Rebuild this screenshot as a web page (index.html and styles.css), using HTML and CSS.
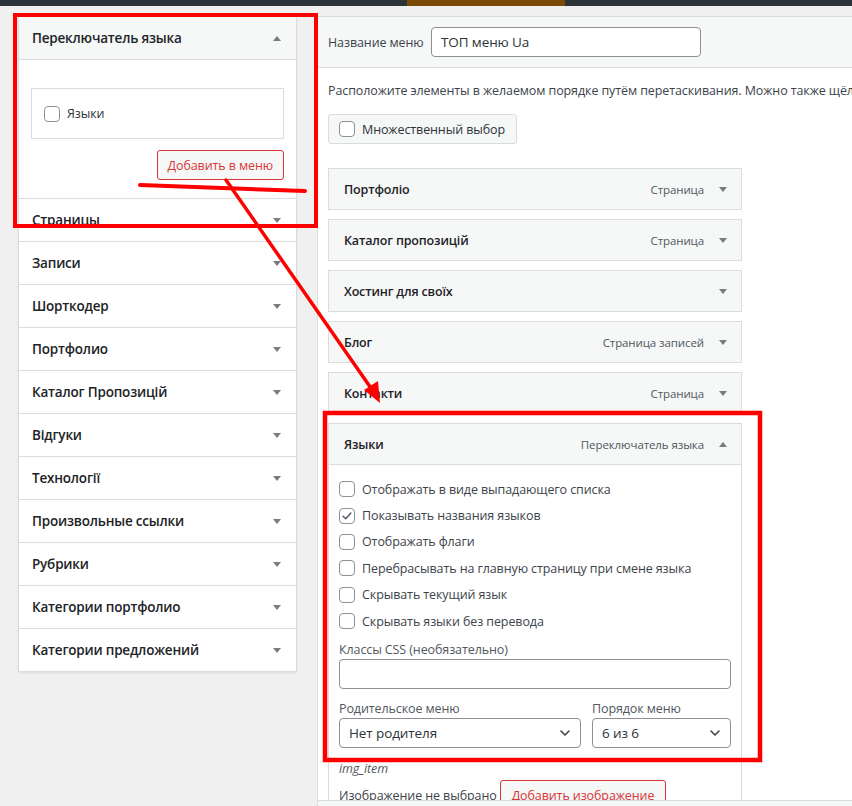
FILE: index.html
```html
<!DOCTYPE html>
<html lang="ru">
<head>
<meta charset="utf-8">
<title>Меню</title>
<link rel="stylesheet" href="styles.css">
</head>
<body>
<div class="topbar"><span class="topbar-accent"></span></div>
<div class="wrap">
  <div class="sidebar">
    <div class="accordion">
      <div class="acc-section open">
        <div class="acc-title"><span>Переключатель языка</span><i class="tri up"></i></div>
        <div class="acc-content">
          <div class="choice-box"><span class="cb"></span><span>Языки</span></div>
          <div class="acc-actions"><span class="btn-red">Добавить в меню</span></div>
        </div>
      </div>
      <div class="acc-section"><div class="acc-title"><span>Страницы</span><i class="tri"></i></div></div>
      <div class="acc-section"><div class="acc-title"><span>Записи</span><i class="tri"></i></div></div>
      <div class="acc-section"><div class="acc-title"><span>Шорткодер</span><i class="tri"></i></div></div>
      <div class="acc-section"><div class="acc-title"><span>Портфолио</span><i class="tri"></i></div></div>
      <div class="acc-section"><div class="acc-title"><span>Каталог Пропозицій</span><i class="tri"></i></div></div>
      <div class="acc-section"><div class="acc-title"><span>Відгуки</span><i class="tri"></i></div></div>
      <div class="acc-section"><div class="acc-title"><span>Технології</span><i class="tri"></i></div></div>
      <div class="acc-section"><div class="acc-title"><span>Произвольные ссылки</span><i class="tri"></i></div></div>
      <div class="acc-section"><div class="acc-title"><span>Рубрики</span><i class="tri"></i></div></div>
      <div class="acc-section"><div class="acc-title"><span>Категории портфолио</span><i class="tri"></i></div></div>
      <div class="acc-section"><div class="acc-title"><span>Категории предложений</span><i class="tri"></i></div></div>
    </div>
  </div>

  <div class="menu-mgmt">
    <div class="menu-header">
      <label class="menu-name-label">Название меню</label>
      <div class="text-input name-input">ТОП меню Ua</div>
    </div>
    <div class="menu-body">
      <p class="instructions">Расположите элементы в желаемом порядке путём перетаскивания. Можно также щёлкнуть на ссылку элемента, чтобы открыть дополнительные настройки.</p>
      <div class="bulk-btn"><span class="cb"></span><span>Множественный выбор</span></div>
      <div class="items">
        <div class="item"><div class="item-handle"><span class="item-title">Портфоліо</span><span class="item-type">Страница</span><i class="tri"></i></div></div>
        <div class="item"><div class="item-handle"><span class="item-title">Каталог пропозицій</span><span class="item-type">Страница</span><i class="tri"></i></div></div>
        <div class="item"><div class="item-handle"><span class="item-title">Хостинг для своїх</span><i class="tri"></i></div></div>
        <div class="item"><div class="item-handle"><span class="item-title">Блог</span><span class="item-type">Страница записей</span><i class="tri"></i></div></div>
        <div class="item"><div class="item-handle"><span class="item-title">Контакти</span><span class="item-type">Страница</span><i class="tri"></i></div></div>
        <div class="item expanded">
          <div class="item-handle"><span class="item-title">Языки</span><span class="item-type">Переключатель языка</span><i class="tri up"></i></div>
          <div class="item-settings">
            <div class="opt"><span class="cb"></span><span>Отображать в виде выпадающего списка</span></div>
            <div class="opt"><span class="cb"><svg viewBox="0 0 16 16" width="14" height="14"><path d="M3.5 8.2 L6.6 11.2 L12.4 4.6" fill="none" stroke="#50575e" stroke-width="1.6" stroke-linecap="round" stroke-linejoin="round"/></svg></span><span>Показывать названия языков</span></div>
            <div class="opt"><span class="cb"></span><span>Отображать флаги</span></div>
            <div class="opt"><span class="cb"></span><span>Перебрасывать на главную страницу при смене языка</span></div>
            <div class="opt"><span class="cb"></span><span>Скрывать текущий язык</span></div>
            <div class="opt"><span class="cb"></span><span>Скрывать языки без перевода</span></div>
            <div class="field">
              <div class="field-label">Классы CSS (необязательно)</div>
              <div class="text-input wide-input"></div>
            </div>
            <div class="field-row">
              <div class="field parent">
                <div class="field-label">Родительское меню</div>
                <div class="select"><span>Нет родителя</span><svg viewBox="0 0 10 6" width="10" height="6"><path d="M1 1 L5 5 L9 1" fill="none" stroke="#3c434a" stroke-width="1.6" stroke-linecap="round" stroke-linejoin="round"/></svg></div>
              </div>
              <div class="field order">
                <div class="field-label">Порядок меню</div>
                <div class="select"><span>6 из 6</span><svg viewBox="0 0 10 6" width="10" height="6"><path d="M1 1 L5 5 L9 1" fill="none" stroke="#3c434a" stroke-width="1.6" stroke-linecap="round" stroke-linejoin="round"/></svg></div>
              </div>
            </div>
            <div class="img-item">img_item</div>
            <div class="img-row"><span>Изображение не выбрано</span><span class="btn-red btn-img">Добавить изображение</span></div>
          </div>
        </div>
      </div>
    </div>
    <div class="menu-footer"></div>
  </div>
</div>

<svg class="annotations" viewBox="0 0 852 806" width="852" height="806">
  <rect x="15" y="15" width="301" height="211" fill="none" stroke="#ff0000" stroke-width="4"/>
  <rect x="325" y="413" width="435" height="347" fill="none" stroke="#ff0000" stroke-width="4.5"/>
  <path d="M140 185 L305 191" stroke="#ff0000" stroke-width="4" stroke-linecap="round"/>
  <path d="M226 180 L373 391" stroke="#ff0000" stroke-width="3.5" stroke-linecap="round"/>
  <path d="M380 403 L364 390 L378 381 Z" fill="#ff0000"/>
</svg>
</body>
</html>
```
FILE: styles.css
```css
* { box-sizing: border-box; }

html, body {
  margin: 0;
  height: 806px;
  overflow: hidden;
}

body {
  position: relative;
  background: #f0f0f1;
  font-family: "Open Sans", "Noto Sans", "DejaVu Sans", sans-serif;
  font-size: 12.5px;
  letter-spacing: -0.1px;
  color: #3c434a;
}

.topbar {
  display: flex;
  height: 6px;
  background: #2c3338;
}
.topbar-accent {
  margin-left: 407px;
  width: 158px;
  background: #7a4a04;
}

.wrap {
  display: flex;
  padding-top: 10px;
  align-items: flex-start;
}

/* ---------- sidebar ---------- */
.sidebar {
  flex: none;
  width: 279px;
  margin-left: 18px;
}
.accordion {
  background: #fff;
  border: 1px solid #dcdcde;
  border-bottom: none;
  box-shadow: 0 1px 2px rgba(0,0,0,.08);
}
.acc-section {
  border-bottom: 1px solid #dcdcde;
}
.acc-title {
  display: flex;
  align-items: center;
  justify-content: space-between;
  height: 42px;
  padding: 0 15px 0 13px;
  font-size: 13.5px;
  letter-spacing: -0.2px;
  font-weight: 600;
  color: #1d2327;
  background: #fff;
}
.acc-section.open .acc-title {
  background: #f6f7f7;
  border-bottom: 1px solid #dcdcde;
  height: 43px;
}
.acc-content {
  padding: 28px 12px 18px;
}
.choice-box {
  display: flex;
  align-items: center;
  gap: 7px;
  height: 51px;
  padding: 0 12px;
  border: 1px solid #dcdcde;
  color: #2c3338;
}
.acc-actions {
  display: flex;
  justify-content: flex-end;
  margin-top: 11px;
}
.btn-red {
  display: inline-flex;
  align-items: center;
  height: 30px;
  padding: 0 10px;
  color: #d63638;
  background: #f6f7f7;
  border: 1px solid #d63638;
  border-radius: 3px;
  white-space: nowrap;
}

.tri {
  display: block;
  width: 0;
  height: 0;
  border-left: 4px solid transparent;
  border-right: 4px solid transparent;
  border-top: 5px solid #787c82;
}
.tri.up {
  border-top: none;
  border-bottom: 5px solid #787c82;
}

.cb {
  flex: none;
  display: inline-flex;
  align-items: center;
  justify-content: center;
  width: 16px;
  height: 16px;
  border: 1px solid #8c8f94;
  border-radius: 4px;
  background: #fff;
}

/* ---------- menu management ---------- */
.menu-mgmt {
  flex: 1;
  min-width: 0;
  margin-left: 20px;
  height: 790px;
  display: flex;
  flex-direction: column;
  background: #fff;
  border-top: 1px solid #dcdcde;
  border-left: 1px solid #dcdcde;
}
.menu-header {
  flex: none;
  display: flex;
  align-items: center;
  height: 51px;
  padding: 0 10px;
  background: #f6f7f7;
  border-bottom: 1px solid #dcdcde;
}
.menu-name-label {
  flex: none;
  width: 103px;
  color: #3c434a;
}
.text-input {
  height: 30px;
  border: 1px solid #8c8f94;
  border-radius: 4px;
  background: #fff;
  display: flex;
  align-items: center;
  padding: 0 9px;
  font-size: 13.5px;
  color: #2c3338;
}
.name-input {
  width: 270px;
}

.menu-body {
  flex: 1;
  overflow: hidden;
  padding: 0 10px;
}
.instructions {
  margin: 13px 0 0;
  line-height: 20px;
  white-space: nowrap;
  color: #3c434a;
}
.bulk-btn {
  display: inline-flex;
  align-items: center;
  gap: 7px;
  margin-top: 13px;
  height: 30px;
  padding: 0 11px 0 10px;
  background: #f6f7f7;
  border: 1px solid #dcdcde;
  border-radius: 3px;
  color: #2c3338;
}

.items {
  width: 414px;
  padding-top: 15px;
}
.item {
  margin-top: 9px;
}
.item-handle {
  display: flex;
  align-items: center;
  height: 42px;
  padding: 0 14px 0 15px;
  background: #f6f7f7;
  border: 1px solid #dcdcde;
}
.item-title {
  flex: 1;
  font-weight: 600;
  font-size: 12.5px;
  letter-spacing: -0.15px;
  color: #1d2327;
}
.item-type {
  font-size: 11.5px;
  color: #50575e;
  margin-right: 15px;
}
.item-settings {
  border: 1px solid #dcdcde;
  border-top: none;
  padding: 11px 10px 20px;
}
.opt {
  display: flex;
  align-items: center;
  gap: 7px;
  height: 26.4px;
  color: #3c434a;
}
.field {
  margin-top: 6px;
}
.field-label {
  line-height: 19px;
  color: #50575e;
}
.wide-input {
  width: 100%;
}
.field-row {
  display: flex;
  gap: 11px;
  margin-top: 10px;
}
.field-row .field { margin-top: 0; }
.field.parent { width: 242px; }
.field.order { width: 139px; }
.select {
  display: flex;
  align-items: center;
  justify-content: space-between;
  height: 30px;
  padding: 0 10px 0 9px;
  border: 1px solid #8c8f94;
  border-radius: 4px;
  background: #fff;
  font-size: 13.5px;
  color: #2c3338;
}
.img-item {
  margin-top: 11px;
  line-height: 20px;
  font-style: italic;
  color: #50575e;
}
.img-row {
  display: flex;
  align-items: center;
  gap: 3px;
  margin-top: 1px;
  color: #3c434a;
}
.btn-img {
  padding: 0 11px;
}

.menu-footer {
  flex: none;
  height: 6px;
  background: #f6f7f7;
  border-top: 1px solid #dcdcde;
}

/* ---------- annotations overlay ---------- */
.annotations {
  position: absolute;
  top: 0;
  left: 0;
  pointer-events: none;
}
```
